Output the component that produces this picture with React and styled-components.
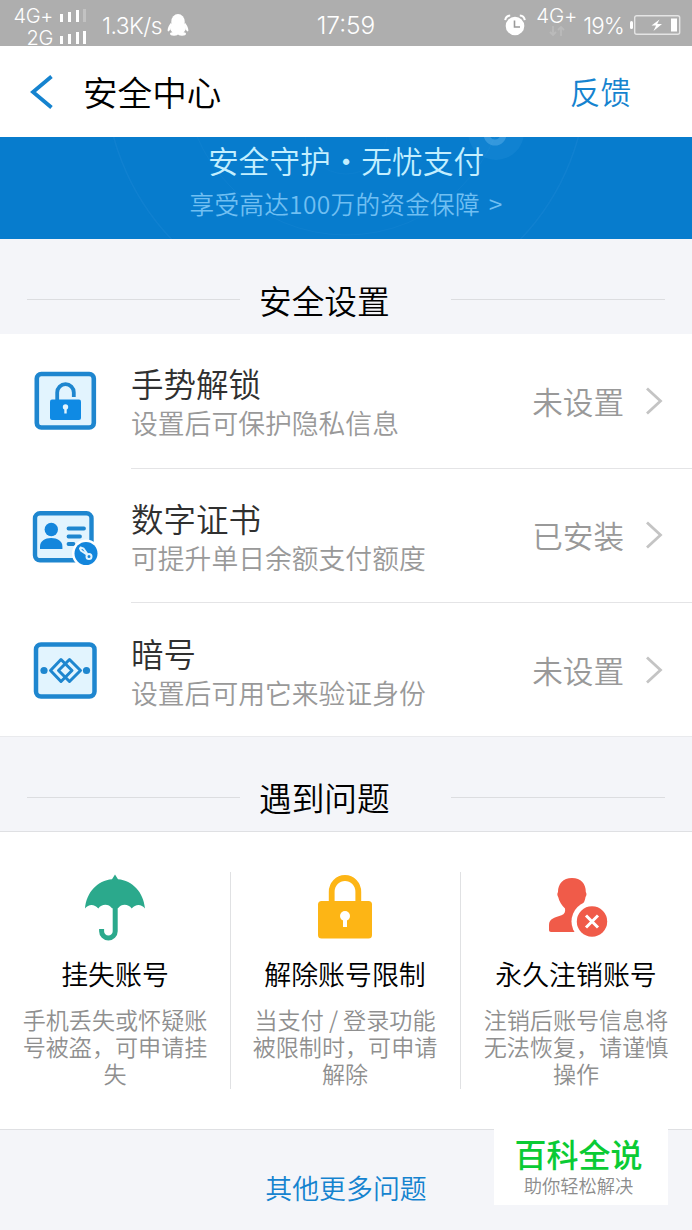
import React from 'react';
import styled, { createGlobalStyle } from 'styled-components';

const GlobalStyle = createGlobalStyle`
  * {
    box-sizing: border-box;
  }

  body {
    margin: 0;
    background: #f4f5f9;
    font-family: 'Noto Sans CJK SC', sans-serif;
    font-weight: 350;
  }

  svg {
    display: block;
    flex: none;
  }
`;

const Page = styled.div`
  position: relative;
  display: flex;
  flex-direction: column;
  width: 692px;
  height: 1230px;
  overflow: hidden;
`;

/* status bar */

const StatusBar = styled.div`
  display: grid;
  grid-template-columns: 1fr auto 1fr;
  height: 46px;
  padding: 0 11px;
  background: #aeaeae;
  color: #fff;
  font-family: Inter, sans-serif;
  font-weight: 350;
`;

const StatusGroup = styled.div`
  display: flex;
  align-items: center;
  justify-content: ${p => (p.$end ? 'flex-end' : 'flex-start')};
`;

const Signals = styled.div`
  display: flex;
  flex-direction: column;
  align-items: flex-end;
  width: 76px;
  padding-top: 5px;
`;

const Signal = styled.div`
  display: flex;
  align-items: center;
  gap: 7px;
  font-size: 20px;
  line-height: 22px;
  letter-spacing: -0.3px;
  white-space: nowrap;
`;

const Speed = styled.span`
  margin: 1px 5px 0 15px;
  font-size: 22.8px;
  letter-spacing: -0.5px;
`;

const Clock = styled.div`
  margin-top: 2px;
  font-size: 24.5px;
  line-height: 46px;
`;

const Network = styled.div`
  display: flex;
  flex-direction: column;
  align-items: center;
  margin: 0 6px 6px 10px;
  font-size: 20.5px;
  line-height: 19px;
  letter-spacing: -0.2px;
`;

const Percent = styled.span`
  margin: 1px 6px 0 0;
  font-size: 22.4px;
  letter-spacing: -0.8px;
`;

/* header and banner */

const Header = styled.header`
  display: flex;
  align-items: center;
  height: 91px;
  padding: 0 61px 0 28px;
  background: #fff;
`;

const Title = styled.h1`
  flex: 1;
  margin: 0 0 0 29px;
  color: #000;
  font-size: 34.6px;
  font-weight: inherit;
  line-height: 91px;
`;

const Feedback = styled.a`
  color: #1583cf;
  font-size: 30.6px;
  line-height: 91px;
`;

const Banner = styled.section`
  display: grid;
  height: 102px;
  background: #077ccd;
  text-align: center;

  > * {
    grid-area: 1 / 1;
  }
`;

const BannerText = styled.div`
  padding-top: 2px;
`;

const Slogan = styled.div`
  color: #c3efff;
  font-size: 30.7px;
  line-height: 42px;
`;

const Promise = styled.div`
  color: #70bff2;
  font-size: 24.6px;
  line-height: 44px;
  letter-spacing: 0.3px;
  word-spacing: 3px;
`;

/* sections */

const SectionHead = styled.div`
  display: flex;
  align-items: center;
  gap: 19px;
  height: 95px;
  padding: 26px 27px 0;
  border-bottom: ${p => (p.$line ? '1px solid #dfe0e3' : 'none')};

  &::before,
  &::after {
    content: '';
    flex: none;
    width: 213px;
    height: 1px;
    background: #dcdde0;
  }

  &::after {
    margin-left: 42px;
    width: 214px;
  }
`;

const SectionTitle = styled.h2`
  margin: 0;
  color: #000;
  font-size: 32.7px;
  font-weight: inherit;
  line-height: 44px;
  white-space: nowrap;
`;

const List = styled.div`
  background: #fff;
  border-bottom: 1px solid #e9eaed;
`;

const Row = styled.div`
  display: flex;
  height: ${p => (p.$last ? 133 : 134.5)}px;
  padding-left: 31px;
`;

const RowIcon = styled.div`
  width: 100px;
  padding-top: 34px;
`;

const RowBody = styled.div`
  display: flex;
  flex: 1;
  align-items: center;
  padding: ${p => (p.$last ? '2px 29px 0 0' : '0 29px 0 0')};
  border-bottom: 1px solid ${p => (p.$last ? 'transparent' : '#e4e4e6')};
`;

const RowText = styled.div`
  flex: 1;
  padding-top: 5px;
`;

const RowTitle = styled.div`
  color: #303030;
  font-size: 32.5px;
  line-height: 40px;
`;

const RowDesc = styled.div`
  color: #999;
  font-size: 26.8px;
  line-height: 40px;
`;

const RowStatus = styled.div`
  margin-right: 21px;
  color: #999;
  font-size: 30.6px;
  line-height: 40px;
`;

const Cards = styled.div`
  display: grid;
  grid-template-columns: 230px 230px 232px;
  height: 298px;
  background: #fff;
  border-bottom: 1px solid #dfe0e3;
`;

const Card = styled.div`
  display: flex;
  flex-direction: column;
  align-items: center;
  height: 217px;
  margin-top: 40px;
  padding: 0 20px 0 19px;
  border-left: 1px solid ${p => (p.$first ? 'transparent' : '#e0e1e3')};
  text-align: center;

  > svg {
    margin-right: 1px;
  }
`;

const CardTitle = styled.div`
  margin-top: 12px;
  color: #000;
  font-size: 26.9px;
  line-height: 40px;
  white-space: nowrap;
`;

const CardDesc = styled.div`
  margin-top: 12px;
  color: #8f8f8f;
  font-size: 23.1px;
  line-height: 27px;
  white-space: pre;
`;

const MoreLink = styled.a`
  padding-top: 37px;
  color: #1583cf;
  font-size: 26.9px;
  line-height: 42px;
  text-align: center;
`;

// sits over the bottom right corner of the page
const Badge = styled.div`
  position: absolute;
  right: 24px;
  bottom: 25px;
  width: 174px;
  height: 76px;
  padding: 4px 5px 0 0;
  background: #fff;
  text-align: center;
`;

const BadgeName = styled.div`
  color: #0acb34;
  font-size: 32px;
  font-weight: 500;
  line-height: 40px;
`;

const BadgeNote = styled.div`
  margin-top: 1px;
  color: #8c8c8c;
  font-size: 18.3px;
  line-height: 22px;
`;

const Bars = ({ weak }) => (
  <svg width="27" height="16" viewBox="0 0 27 16" fill="#fff">
    <rect x="0" y="6" width="3" height="8" />
    <rect x="8" y="4" width="3" height="10" />
    <rect x="16" y="2" width="3" height="12" />
    <rect x="23" y="1" width="3" height="13" opacity={weak ? 0.25 : 1} />
  </svg>
);

const Penguin = () => (
  <svg width="22" height="24" viewBox="0 0 22 24" fill="#fff">
    <ellipse cx="11" cy="8.500" rx="6.700" ry="7.500" />
    <ellipse cx="11" cy="14.500" rx="8" ry="7" />
    <path d="M4.500 9C2.500 11.500.6 14.500.6 17.300c0 1.700 1.200 1.400 2.800-.8zM17.500 9c2 2.500 3.900 5.500 3.900 8.300 0 1.700-1.200 1.400-2.800-.8z" />
    <ellipse cx="7" cy="20.800" rx="4" ry="1.900" />
    <ellipse cx="15" cy="20.800" rx="4" ry="1.900" />
  </svg>
);

const Alarm = () => (
  <svg width="22" height="22" viewBox="0 0 22 22">
    <circle cx="11" cy="12" r="9.300" fill="#fff" />
    <path d="M1.200 6.200A5.500 5.500 0 0 1 6.200 1.500M20.800 6.200A5.500 5.500 0 0 0 15.800 1.500" fill="none" stroke="#fff" strokeWidth="2" />
    <path d="M10.500 6.500V13H16" fill="none" stroke="#9b9b9b" strokeWidth="1.600" />
  </svg>
);

const DataArrows = () => (
  <svg width="16" height="12" viewBox="0 0 16 12" fill="none" stroke="#bababa" strokeWidth="1.800">
    <path d="M4 1v9M1 7l3 3 3-3M12 11V2M9 5l3-3 3 3" />
  </svg>
);

const Battery = () => (
  <svg width="51" height="20" viewBox="0 0 51 20">
    <rect x="0" y="6" width="3" height="8" rx="1.500" fill="#fff" />
    <rect x="4.700" y=".7" width="45" height="18.600" rx="2" fill="none" stroke="#e4e4e4" strokeWidth="1.400" />
    <path d="M29.500 4.500l-8 6h4.600l-2.600 5.500 8.500-7h-4.800z" fill="#fff" />
    <rect x="41" y="3.500" width="6" height="13" fill="#fff" />
  </svg>
);

const BackArrow = () => (
  <svg width="26" height="34" viewBox="0 0 26 34" fill="none" stroke="#1583cf" strokeWidth="3.800">
    <path d="M23.500 1.500L5 17l18.500 15.500" />
  </svg>
);

const BannerRings = () => (
  <svg width="692" height="102" viewBox="0 0 692 102" fill="none" stroke="#2b90da" strokeOpacity=".25">
    <circle cx="346" cy="-64" r="241" strokeWidth="1.500" />
    <circle cx="346" cy="-64" r="162" strokeOpacity=".18" />
    <circle cx="346" cy="-4" r="41" strokeOpacity=".15" />
    <circle cx="496" cy="-5" r="28" fill="#49a7e8" fillOpacity=".14" stroke="none" />
    <circle cx="495" cy="-3" r="8.500" stroke="#78c4f4" strokeOpacity=".35" strokeWidth="6" />
  </svg>
);

const Chevron = () => (
  <svg width="18" height="28" viewBox="0 0 18 28" fill="none" stroke="#c4c4c4" strokeWidth="2.800">
    <path d="M2 1.500L15.500 14 2 26.500" />
  </svg>
);

const GestureIcon = () => (
  <svg width="68" height="66" viewBox="0 0 68 66">
    <rect x="5.800" y="6" width="57" height="53.500" rx="4.500" fill="#e2f4fe" stroke="#1e86cf" strokeWidth="4.600" />
    <path d="M26.200 32v-7.500a8.300 8.300 0 0 1 16.600 0V29" fill="none" stroke="#1e86cf" strokeWidth="3.800" />
    <rect x="19" y="31.500" width="31" height="20.500" rx="2" fill="#0f8ae4" />
    <circle cx="34.500" cy="39" r="2.700" fill="#e2f4fe" />
    <path d="M34.500 39v6.500" stroke="#e2f4fe" strokeWidth="2.400" />
  </svg>
);

const CertIcon = () => (
  <svg width="68" height="66" viewBox="0 0 68 66">
    <rect x="4" y="10.300" width="56.500" height="47" rx="5" fill="#e2f4fe" stroke="#1e86cf" strokeWidth="4.400" />
    <circle cx="20.300" cy="26.500" r="6.700" fill="#1486dc" />
    <path d="M9 46v-2.500C9 38 14 35 20.200 35s11.200 3 11.200 8.500V46z" fill="#1486dc" />
    <path d="M37.500 25.500H53M37.500 33.500H49M37.500 41h5" stroke="#1e86cf" strokeWidth="3.800" strokeLinecap="round" />
    <circle cx="55" cy="50.500" r="14" fill="#fff" />
    <circle cx="55" cy="50.500" r="11.500" fill="#1486dc" />
    <path d="M49 45.500l1 2 5 3.500M49.500 44.500l3 1 3.500 5" fill="none" stroke="#e2f4fe" strokeWidth="2" strokeLinecap="round" />
    <circle cx="58" cy="53.500" r="2.500" fill="#1486dc" stroke="#e2f4fe" strokeWidth="2" />
  </svg>
);

const CodeIcon = () => (
  <svg width="68" height="66" viewBox="0 0 68 66">
    <rect x="5" y="7.500" width="58.500" height="52" rx="5" fill="#e2f4fe" stroke="#1e86cf" strokeWidth="4.500" />
    <g fill="none" stroke="#1e86cf" strokeWidth="3" strokeLinejoin="round">
      <path d="M30 22.500L41 33.500 30 44.500 19.500 33.500z" />
      <path d="M38.500 22.500L49.500 33.500 38.500 44.500 27.500 33.500z" />
    </g>
    <circle cx="13" cy="33.500" r="3.600" fill="#1e86cf" />
    <circle cx="55.500" cy="33.500" r="3.600" fill="#1e86cf" />
  </svg>
);

const UmbrellaIcon = () => (
  <svg width="64" height="70" viewBox="0 0 64 70">
    <path d="M32 2.500l3 4.700C49.500 8.500 60.500 20 62 36.500c-3.500-4.700-9.500-4.700-13.300 0-3.300-4.700-10.200-5-13.700-.3h-6c-3.500-4.700-10.400-4.400-13.700.3-3.800-4.700-9.800-4.700-13.300 0C3.500 20 14.500 8.500 29 7.200z" fill="#2ba98c" />
    <path d="M32.200 33v26.200a6.800 6.800 0 0 1-13.600 0V57" fill="none" stroke="#2ba98c" strokeWidth="5" />
  </svg>
);

const LockIcon = () => (
  <svg width="64" height="70" viewBox="0 0 64 70">
    <path d="M18.700 32V20a13.300 14 0 0 1 26.600 0v12" fill="none" stroke="#fdb515" strokeWidth="5.800" />
    <rect x="5" y="29" width="54" height="37.500" rx="3.500" fill="#fdb515" />
    <circle cx="32" cy="44" r="5" fill="#fff" />
    <path d="M32 45v10" stroke="#fff" strokeWidth="4" />
  </svg>
);

const CancelIcon = () => (
  <svg width="64" height="70" viewBox="0 0 64 70">
    <path d="M28 6C19 6 14 12 14 20c-1 1.500-.8 3.500.2 5 1 4.500 3.500 8.500 6.800 11.500.6 3.500-.5 5.500-3.500 6.800C11.500 45.500 5 46.500 5 53v5c0 1.200.8 2 2 2h42V38H37c-1.500-1 .5-3 1.500-5 1.500-2.500 2.600-5 3-8 1.200-1.500 1.300-3.500.3-5C42 12 37 6 28 6z" fill="#f05b49" />
    <circle cx="48" cy="49.500" r="20.500" fill="#fff" />
    <circle cx="48" cy="49.500" r="15.200" fill="#f05b49" />
    <path d="M42 43.500l12 12M54 43.500l-12 12" stroke="#fff" strokeWidth="3" />
  </svg>
);

const settings = [
  { icon: <GestureIcon />, title: '手势解锁', desc: '设置后可保护隐私信息', status: '未设置' },
  { icon: <CertIcon />, title: '数字证书', desc: '可提升单日余额支付额度', status: '已安装' },
  { icon: <CodeIcon />, title: '暗号', desc: '设置后可用它来验证身份', status: '未设置' }
];

const problems = [
  { icon: <UmbrellaIcon />, title: '挂失账号', desc: '手机丢失或怀疑账\n号被盗，可申请挂\n失' },
  { icon: <LockIcon />, title: '解除账号限制', desc: '当支付 / 登录功能\n被限制时，可申请\n解除' },
  { icon: <CancelIcon />, title: '永久注销账号', desc: '注销后账号信息将\n无法恢复，请谨慎\n操作' }
];

const App = () => (
  <Page>
    <GlobalStyle />
    <StatusBar>
      <StatusGroup>
        <Signals>
          <Signal>4G+ <Bars weak /></Signal>
          <Signal>2G <Bars /></Signal>
        </Signals>
        <Speed>1.3K/s</Speed>
        <Penguin />
      </StatusGroup>
      <Clock>17:59</Clock>
      <StatusGroup $end>
        <Alarm />
        <Network>
          4G+
          <DataArrows />
        </Network>
        <Percent>19%</Percent>
        <Battery />
      </StatusGroup>
    </StatusBar>

    <Header>
      <BackArrow />
      <Title>安全中心</Title>
      <Feedback>反馈</Feedback>
    </Header>

    <Banner>
      <BannerRings />
      <BannerText>
        <Slogan>安全守护・无忧支付</Slogan>
        <Promise>享受高达100万的资金保障 &gt;</Promise>
      </BannerText>
    </Banner>

    <SectionHead>
      <SectionTitle>安全设置</SectionTitle>
    </SectionHead>
    <List>
      {settings.map((item, i) => {
        const last = i === settings.length - 1;
        return (
          <Row key={item.title} $last={last}>
            <RowIcon>{item.icon}</RowIcon>
            <RowBody $last={last}>
              <RowText>
                <RowTitle>{item.title}</RowTitle>
                <RowDesc>{item.desc}</RowDesc>
              </RowText>
              <RowStatus>{item.status}</RowStatus>
              <Chevron />
            </RowBody>
          </Row>
        );
      })}
    </List>

    <SectionHead $line>
      <SectionTitle>遇到问题</SectionTitle>
    </SectionHead>
    <Cards>
      {problems.map((item, i) => (
        <Card key={item.title} $first={i === 0}>
          {item.icon}
          <CardTitle>{item.title}</CardTitle>
          <CardDesc>{item.desc}</CardDesc>
        </Card>
      ))}
    </Cards>

    <MoreLink>其他更多问题</MoreLink>

    <Badge>
      <BadgeName>百科全说</BadgeName>
      <BadgeNote>助你轻松解决</BadgeNote>
    </Badge>
  </Page>
);

export default App;
